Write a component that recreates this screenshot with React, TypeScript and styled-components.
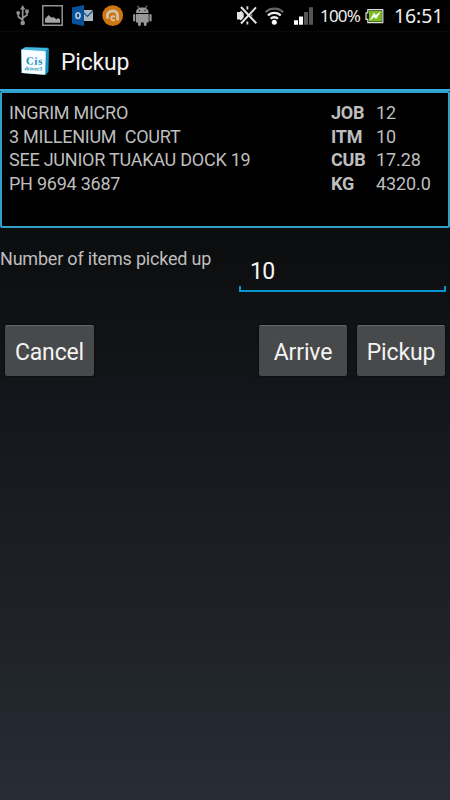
import React from "react";
import styled, { createGlobalStyle } from "styled-components";

const Global = createGlobalStyle`
  * { box-sizing: border-box; }
  body { margin: 0; background: #000; font-family: Roboto, sans-serif; }
`;

const Screen = styled.main`
  display: flex;
  flex-direction: column;
  width: 450px;
  height: 800px;
  overflow: hidden;
  background: linear-gradient(180deg, #000 0, #08090b 180px, #0e0f11 270px, #13161a 400px, #1b1e23 550px, #22262d 700px, #282c34 800px);
  color: #bebebe;
`;

const StatusBar = styled.header`
  display: flex;
  justify-content: space-between;
  height: 32px;
  flex: none;
  background: #000;
  border-bottom: 1px solid #0b0b0b;
`;

const StatusGroup = styled.div`
  display: flex;
  height: 31px;
`;

const StatusText = styled.span<{ $size: number; $width: number; $spacing?: number }>`
  width: ${(p) => p.$width}px;
  font: 400 ${(p) => p.$size}px/32px "Noto Sans", sans-serif;
  letter-spacing: ${(p) => p.$spacing ?? 0}px;
  color: #eee;
  white-space: nowrap;
`;

const ActionBar = styled.div`
  display: flex;
  align-items: center;
  height: 59px;
  flex: none;
  padding: 0 0 0 20px;
  gap: 11px;
  background: #020202;
  border-bottom: 2px solid #35a9d9;
`;

const Title = styled.h1`
  margin: 4px 0 0;
  font-size: 23px;
  line-height: 30px;
  font-weight: 400;
  letter-spacing: -0.2px;
  color: #f3f3f3;
`;

const JobCard = styled.section`
  display: grid;
  grid-template-columns: 322px 45px 1fr;
  align-content: start;
  height: 137px;
  flex: none;
  padding: 8px 0 0 7px;
  background: #000;
  border: 2px solid #309fca;
  border-radius: 2px;
`;

const Cell = styled.span<{ $bold?: boolean; $spacing?: number }>`
  font-size: 18px;
  line-height: 23.7px;
  font-weight: ${(p) => (p.$bold ? 700 : 400)};
  letter-spacing: ${(p) => p.$spacing ?? 0}px;
  white-space: pre;
`;

const CountRow = styled.label`
  display: flex;
  justify-content: space-between;
  height: 64px;
  flex: none;
  padding: 19px 4px 0 0;
`;

const CountLabel = styled.span`
  font-size: 18px;
  line-height: 24px;
  letter-spacing: -0.2px;
  white-space: nowrap;
`;

const CountField = styled.span`
  display: flex;
  flex-direction: column;
  justify-content: flex-end;
  width: 207px;
`;

const CountInput = styled.input`
  width: 100%;
  height: 34px;
  padding: 4px 11px 0;
  border: 0;
  outline: 0;
  background: transparent;
  color: #f5f5f5;
  font: 400 23px/30px Roboto, sans-serif;
  letter-spacing: -0.6px;
`;

const Underline = styled.span`
  height: 6px;
  border: 2px solid #0797ce;
  border-top: 0;
`;

const Buttons = styled.div`
  display: flex;
  gap: 10px;
  padding: 33px 5px 0;
`;

const Button = styled.button<{ $width: number; $pushRight?: boolean }>`
  width: ${(p) => p.$width}px;
  height: 51px;
  margin-left: ${(p) => (p.$pushRight ? "auto" : "0")};
  padding: 3px 0 0;
  border: 0;
  border-top: 1px solid #68696a;
  border-radius: 2px;
  background: #48494b;
  box-shadow: 0 0 1px 1px rgba(0, 0, 0, 0.35);
  color: #f3f3f3;
  font: 400 23px/28px Roboto, sans-serif;
  letter-spacing: -0.15px;
`;

const NotificationIcons = () => (
  <svg width="156" height="31" viewBox="0 0 156 31" aria-hidden="true">
    <g stroke="#929292" fill="none" strokeWidth="1.7">
      <path d="M22.7 8V22M22.7 20 18.3 16.7V12.5M22.7 18 27 15V10.5" />
    </g>
    <g fill="#929292">
      <path d="M22.7 5 25.3 9.5H20.1z" />
      <circle cx="22.7" cy="23" r="2.3" />
      <circle cx="18.2" cy="12.8" r="1.9" />
      <path d="M25.3 9.5h3.4v3.5h-3.4z" />
    </g>
    <path d="M42.8 5.8H62.2V25.2H42.8z" fill="none" stroke="#929292" strokeWidth="1.5" />
    <path d="M45 22.8V18.8L48.7 15 51.5 17.8 53.3 17 56.5 19.3 58.3 18 60 19.4V22.8z" fill="#a3a3a3" />
    <path d="M84 10H93V21H84z" fill="#a9b7c4" />
    <path d="M84 13 87.5 16.5 93 10.5" fill="none" stroke="#145589" strokeWidth="1.2" />
    <path d="M72 7.5 84 5V26L72 23.5z" fill="#07529a" />
    <ellipse cx="78" cy="15.6" rx="2.1" ry="2.9" fill="none" stroke="#b8cbda" strokeWidth="1.6" />
    <circle cx="112.7" cy="15.6" r="10.4" fill="#ce7610" />
    <path d="M108 18.5C106 14 108.8 10.8 112.6 10.8 116.4 10.8 117.6 13.5 117.6 16V20.5" fill="none" stroke="#d2c4ae" strokeWidth="2.7" />
    <path d="M114.8 20.2C111.6 20.8 110.4 18.5 111.7 16.8 112.7 15.6 114.6 16 114.6 17.6" fill="none" stroke="#d2c4ae" strokeWidth="1.8" />
    <g fill="#979797">
      <path d="M136 13C136 9 138.5 7.5 142.3 7.5S148.6 9 148.6 13zM136 14H148.7V22.5H136z" />
      <rect x="133.1" y="14" width="2.2" height="7.6" rx="1.1" />
      <rect x="149.4" y="14" width="2.2" height="7.6" rx="1.1" />
      <rect x="138" y="19" width="2.8" height="7" rx="1.3" />
      <rect x="143.8" y="19" width="2.8" height="7" rx="1.3" />
      <path d="M137.6 5.7 139.5 8.5M147 5.7 145.1 8.5" stroke="#979797" />
    </g>
    <circle cx="139.5" cy="10.6" r=".7" />
    <circle cx="145" cy="10.6" r=".7" />
  </svg>
);

const SignalIcons = () => (
  <svg width="84" height="31" viewBox="236 0 84 31" aria-hidden="true">
    <path d="M237 12H239.6L243.7 8.5V23L239.6 19.5H237z" fill="#e1e1e1" />
    <path d="M247.4 6.3V9.5M247.4 21.5V24.5M251.3 14V17.5" stroke="#ddd" strokeWidth="1.8" />
    <path d="M240 7 256.5 23.5M256.2 7.2 240 24" stroke="#000" strokeWidth="3.8" />
    <path d="M241 7 256.3 23.3M256 7.4 241 23.5" stroke="#e5e5e5" strokeWidth="2" />
    <g fill="none" strokeWidth="2.3">
      <path d="M265.6 12.2C270 7.4 278.7 7.4 283.1 12.2" stroke="#666" />
      <path d="M268 15.6C271.2 12 277.5 12 280.7 15.6" stroke="#efefef" />
      <path d="M270.7 18.8C272.6 16.7 276 16.7 278 18.8" stroke="#efefef" />
    </g>
    <circle cx="274.3" cy="22.3" r="2.5" fill="#fff" />
    <path d="M294 20.3H298V24.7H294zM299 16.6H303V24.7H299z" fill="#fff" />
    <path d="M304 12H308V24.7H304zM309 7.3H313V24.7H309z" fill="#555" />
  </svg>
);

const BatteryIcon = () => (
  <svg width="29" height="31" viewBox="365 0 29 31" aria-hidden="true">
    <path d="M367.8 9.6H382.8V22.6H367.8V19.3H366V12.8H367.8z" fill="#18210b" stroke="#ddd" strokeWidth="1.2" />
    <path d="M369 10.8H381.8V21.5H369z" fill="#7dbd24" />
    <path d="M381.3 11 375.8 15 374 12.8 369.3 20.8 374.3 16.9 376.1 19z" fill="#fff" />
  </svg>
);

const AppLogo = styled.svg`
  display: block;
  width: 30px;
  height: 29px;
  margin-top: 1px;
`;

const Logo = () => (
  <AppLogo viewBox="20 46 30 29" aria-label="Cis driver3">
    <path d="M21.2 48.5 25.3 46.1 48 46.8 49 48.3 48.4 70.7 45.7 74 21.4 72z" fill="#158fc2" />
    <path d="M22 48.4 25.5 46.5 48 47.3 45.2 50.2z" fill="#47b9df" />
    <path d="M21.3 49.1Q21.3 48.4 22.2 48.5L45.2 50.2 45.8 51 45.2 73 44.5 73.8 21.8 72z" fill="#f6fcff" />
    <g fill="#168fbc" fontFamily="Liberation Serif, serif" fontWeight="700" textAnchor="middle" transform="rotate(2 33 62)">
      <text x="34" y="63.6" fontSize="11" textLength="16.5">Cis</text>
      <text x="33.5" y="69.5" fontSize="5.6" textLength="17.5">driver3</text>
    </g>
  </AppLogo>
);

const rows = [
  { address: "INGRIM MICRO", label: "JOB", value: "12" },
  { address: "3 MILLENIUM  COURT", label: "ITM", value: "10" },
  { address: "SEE JUNIOR TUAKAU DOCK 19", label: "CUB", value: "17.28" },
  { address: "PH 9694 3687", label: "KG", value: "4320.0" },
];

export default function App() {
  return (
    <>
      <Global />
      <Screen>
        <StatusBar>
          <StatusGroup><NotificationIcons /></StatusGroup>
          <StatusGroup>
            <SignalIcons />
            <StatusText $size={17} $width={45} $spacing={-0.8}>100%</StatusText>
            <BatteryIcon />
            <StatusText $size={19.5} $width={56} $spacing={-0.1}>16:51</StatusText>
          </StatusGroup>
        </StatusBar>
        <ActionBar><Logo /><Title>Pickup</Title></ActionBar>
        <JobCard>
          {rows.map((row) => (
            <React.Fragment key={row.label}>
              <Cell $spacing={-0.24}>{row.address}</Cell>
              <Cell $bold $spacing={-0.2}>{row.label}</Cell>
              <Cell $spacing={-0.1}>{row.value}</Cell>
            </React.Fragment>
          ))}
        </JobCard>
        <CountRow>
          <CountLabel>Number of items picked up</CountLabel>
          <CountField>
            <CountInput defaultValue="10" />
            <Underline />
          </CountField>
        </CountRow>
        <Buttons>
          <Button $width={89}>Cancel</Button>
          <Button $width={88} $pushRight>Arrive</Button>
          <Button $width={88}>Pickup</Button>
        </Buttons>
      </Screen>
    </>
  );
}
